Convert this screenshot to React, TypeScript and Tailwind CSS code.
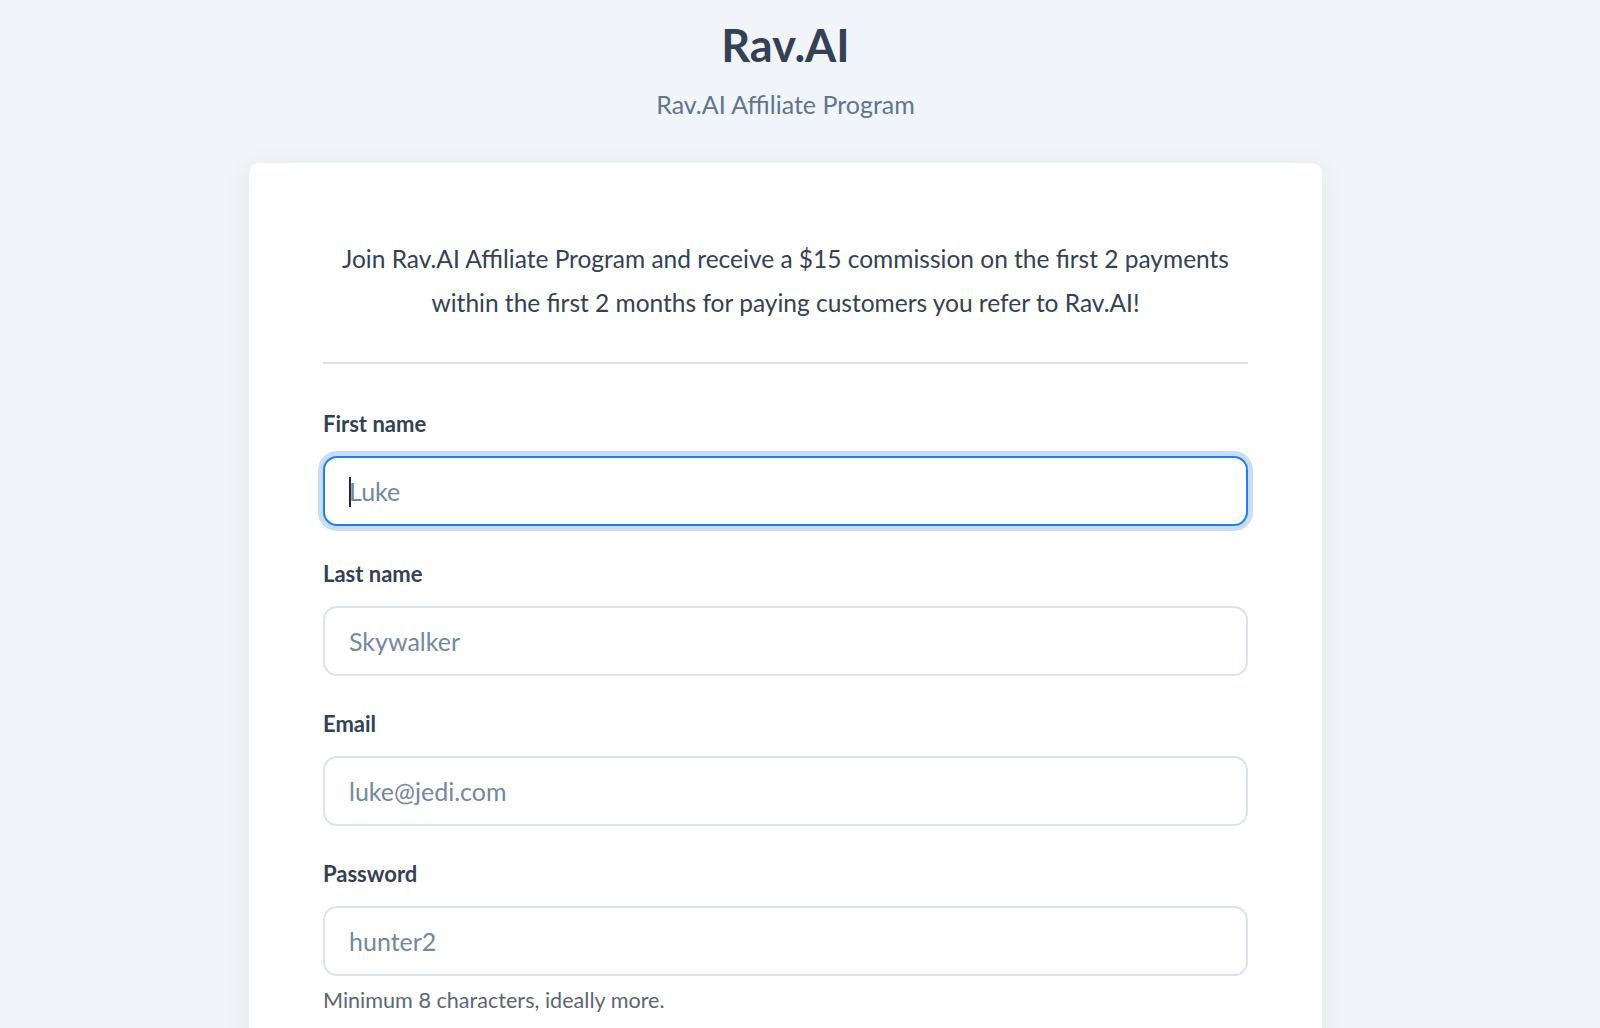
import React from "react";

function Field({
  label,
  placeholder,
  focused,
  helper,
  type = "text",
}: {
  label: string;
  placeholder: string;
  focused?: boolean;
  helper?: string;
  type?: string;
}) {
  return (
    <div className="flex flex-col">
      <label className="text-[22px] leading-[28px] font-bold text-[#334155]">{label}</label>
      <div className="relative mt-[18px]">
        <input
          type={type}
          readOnly
          placeholder={placeholder}
          className={
            focused
              ? "block w-full h-[70px] rounded-[14px] border-2 border-[#1d7ff3] bg-white px-[24px] text-[25px] text-[#334155] outline-none ring-[5px] ring-[#c9ddfb] placeholder:text-[#7288a2]"
              : "block w-full h-[70px] rounded-[14px] border-2 border-[#dbe3ed] bg-white px-[24px] text-[25px] text-[#334155] outline-none placeholder:text-[#7288a2]"
          }
        />
        {focused && (
          <span className="pointer-events-none absolute left-[26px] top-[21px] h-[30px] w-[2px] bg-[#1e293b]" />
        )}
      </div>
      {helper && (
        <p className="mt-[10px] text-[21.6px] leading-[28px] text-[#5b6677]">{helper}</p>
      )}
    </div>
  );
}

export default function App() {
  return (
    <div className="h-screen w-full overflow-hidden bg-[#f1f5f9] font-[Lato,sans-serif]">
      <div className="flex w-[1571px] flex-col items-center">
        <h1 className="pt-[18px] text-[45px] leading-[54px] font-bold text-[#334155]">Rav.AI</h1>
        <p className="mt-[17px] text-[25px] leading-[30px] text-[#5e7590]">Rav.AI Affiliate Program</p>
        <div className="mt-[44px] w-[1073px] rounded-[10px] bg-white px-[74px] pt-[74px] pb-[74px] shadow-[0_4px_28px_rgba(30,41,59,0.07)]">
          <p className="text-center text-[24.5px] leading-[44.4px] text-[#334155]">
            Join Rav.AI Affiliate Program and receive a $15 commission on the first 2 payments
            <br />
            within the first 2 months for paying customers you refer to Rav.AI!
          </p>
          <div className="mt-[36px] mb-[46px] h-[2px] bg-[#dcdfe4]" />
          <div className="flex flex-col gap-[34px]">
            <Field label="First name" placeholder="Luke" focused />
            <Field label="Last name" placeholder="Skywalker" />
            <Field label="Email" placeholder="luke@jedi.com" type="email" />
            <Field
              label="Password"
              placeholder="hunter2"
              type="password"
              helper="Minimum 8 characters, ideally more."
            />
          </div>
        </div>
      </div>
    </div>
  );
}
